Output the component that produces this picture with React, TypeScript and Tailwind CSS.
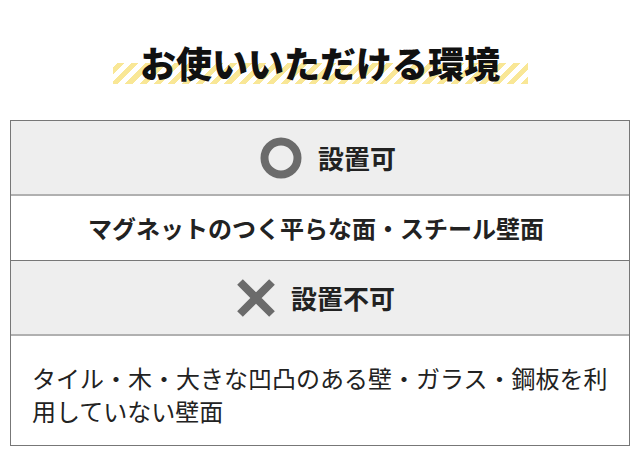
import React from "react";

const font = { fontFamily: '"Noto Sans CJK JP", "Noto Sans", sans-serif' };

function CircleIcon() {
  return (
    <svg width="42" height="42" viewBox="0 0 42 42" className="shrink-0">
      <circle cx="21" cy="21" r="16.5" fill="none" stroke="#6b6b6b" strokeWidth="8" />
    </svg>
  );
}

function CrossIcon() {
  return (
    <svg width="38" height="38" viewBox="0 0 38 38" className="shrink-0">
      <path d="M3 3 L35 35 M35 3 L3 35" stroke="#6b6b6b" strokeWidth="8" strokeLinecap="butt" />
    </svg>
  );
}

export default function App() {
  return (
    <div className="w-[640px] h-[453px] bg-white text-[#1a1a1a]" style={font}>
      <div className="pt-[44px] flex justify-center">
        <div className="relative w-[415px] h-[40px] flex justify-center">
          <div className="absolute left-0 right-0 bottom-0 h-[21px] bg-[repeating-linear-gradient(-45deg,#f9e796_0px,#f9e796_5px,transparent_5px,transparent_10px)]" />
          <h1 className="relative text-[36px] leading-[36px] font-black text-[#111]">お使いいただける環境</h1>
        </div>
      </div>
      <div className="mt-[36px] mx-[10px] w-[620px] border border-[#777]">
        <div className="h-[73px] bg-[#eeeeee] box-content border-b-2 border-[#b0b0b0] flex items-center justify-center gap-[16px] pl-[16px]">
          <CircleIcon />
          <span className="text-[26px] font-bold text-[#222]">設置可</span>
        </div>
        <div className="h-[64px] flex items-center justify-center border-b border-[#777] box-content pr-[8px]">
          <span className="text-[24px] font-bold text-[#222]">マグネットのつく平らな面・スチール壁面</span>
        </div>
        <div className="h-[73px] bg-[#eeeeee] box-content border-b-2 border-[#b0b0b0] flex items-center justify-center gap-[16px] pr-[8px]">
          <CrossIcon />
          <span className="text-[26px] font-bold text-[#222]">設置不可</span>
        </div>
        <div className="h-[109px] pt-[25px] pl-[21px] pr-[16px]">
          <p className="text-[24px] leading-[33px] text-[#222]">タイル・木・大きな凹凸のある壁・ガラス・鋼板を利用していない壁面</p>
        </div>
      </div>
    </div>
  );
}
